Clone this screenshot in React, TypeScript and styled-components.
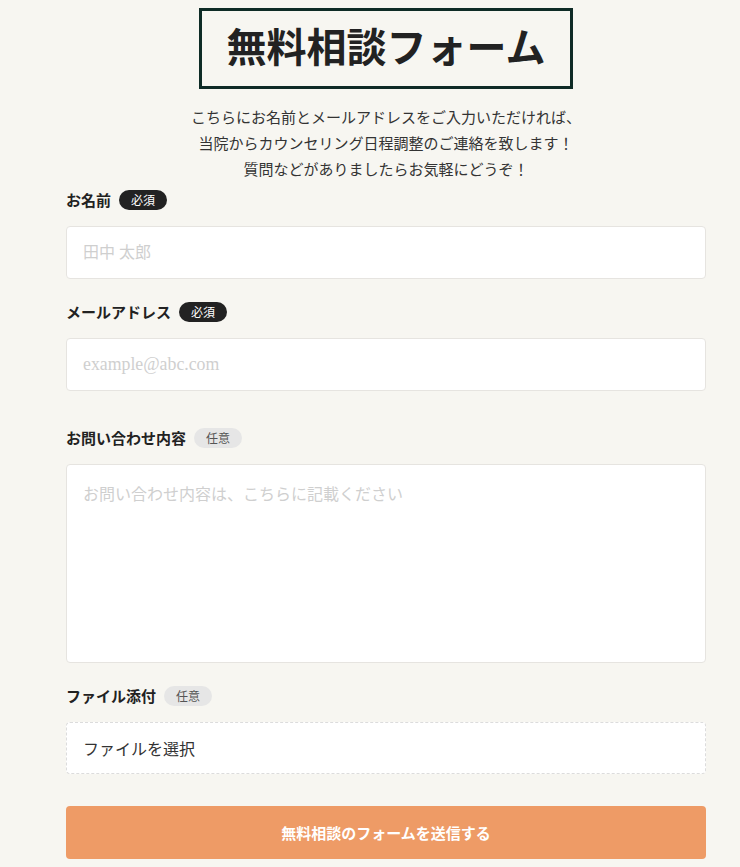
import React from 'react';
import styled, { createGlobalStyle } from 'styled-components';

const GlobalStyle = createGlobalStyle`
    body {
        margin: 0;
        background: #f7f6f1;
        font-family: 'Liberation Serif', 'Noto Sans CJK JP', serif;
        color: #333;
    }
`;

interface IBadge {
    required: boolean;
};

const App = () => {
  return (
    <>
        <GlobalStyle />
        <StyledPage>
            <StyledTitle>無料相談フォーム</StyledTitle>
            <StyledLead>
                こちらにお名前とメールアドレスをご入力いただければ、<br />
                当院からカウンセリング日程調整のご連絡を致します！<br />
                質問などがありましたらお気軽にどうぞ！
            </StyledLead>
            <StyledForm onSubmit={e => e.preventDefault()}>
                <StyledField>
                    <StyledLabel>お名前<StyledBadge required>必須</StyledBadge></StyledLabel>
                    <StyledInput type='text' placeholder='田中 太郎' />
                </StyledField>
                <StyledField wide>
                    <StyledLabel>メールアドレス<StyledBadge required>必須</StyledBadge></StyledLabel>
                    <StyledInput type='email' placeholder='example@abc.com' latin />
                </StyledField>
                <StyledField>
                    <StyledLabel>お問い合わせ内容<StyledBadge required={false}>任意</StyledBadge></StyledLabel>
                    <StyledTextarea placeholder='お問い合わせ内容は、こちらに記載ください' />
                </StyledField>
                <StyledField>
                    <StyledLabel>ファイル添付<StyledBadge required={false}>任意</StyledBadge></StyledLabel>
                    <StyledFile>ファイルを選択</StyledFile>
                </StyledField>
                <StyledSubmit type='submit'>無料相談のフォームを送信する</StyledSubmit>
            </StyledForm>
        </StyledPage>
    </>
  )
}

export default App;

const StyledPage = styled.main`
    width: 640px;
    margin: 0 auto;
    padding: 8px 0 0 32px;
    display: flex;
    flex-direction: column;
    align-items: center;
`;

const StyledTitle = styled.h1`
    margin: 0;
    padding: 8px 25px 8px;
    border: 3px solid #0e2b26;
    font-size: 40px;
    line-height: 59px;
    font-weight: 700;
    color: #222;
`;

const StyledLead = styled.p`
    margin: 16px 0 0;
    text-align: center;
    font-size: 15px;
    line-height: 26px;
    color: #333;
`;

const StyledForm = styled.form`
    width: 100%;
    margin-top: 6px;
    display: flex;
    flex-direction: column;
`;

const StyledField = styled.div<{ wide?: boolean }>`
    display: flex;
    flex-direction: column;
    gap: 16px;
    margin-bottom: ${props => props.wide ? '36px' : '22px'};
`;

const StyledLabel = styled.label`
    display: flex;
    align-items: center;
    gap: 8px;
    height: 21px;
    font-size: 15px;
    font-weight: 700;
    color: #222;
`;

const StyledBadge = styled.span<IBadge>`
    display: inline-flex;
    align-items: center;
    justify-content: center;
    height: 20px;
    padding: 0 12px;
    border-radius: 10px;
    font-size: 12px;
    font-weight: 400;
    background: ${props => props.required ? '#222' : '#e6e6e6'};
    color: ${props => props.required ? '#fff' : '#555'};
`;

const StyledInput = styled.input<{ latin?: boolean }>`
    box-sizing: border-box;
    width: 100%;
    height: 53px;
    padding: 0 16px;
    border: 1px solid #e6e4e0;
    border-radius: 4px;
    background: #fff;
    font-family: inherit;
    font-size: ${props => props.latin ? '17.8px' : '16px'};
    color: #333;
    outline: none;

    &::placeholder {
        color: #cfcfcf;
    }
`;

const StyledTextarea = styled.textarea`
    box-sizing: border-box;
    width: 100%;
    height: 199px;
    padding: 18px 16px;
    border: 1px solid #e6e4e0;
    border-radius: 4px;
    background: #fff;
    font-family: inherit;
    font-size: 16px;
    line-height: 24px;
    color: #333;
    resize: none;
    outline: none;

    &::placeholder {
        color: #cfcfcf;
    }
`;

const StyledFile = styled.div`
    box-sizing: border-box;
    display: flex;
    align-items: center;
    height: 52px;
    padding: 0 16px;
    border: 1px dashed #dcdcdc;
    border-radius: 4px;
    background: #fff;
    font-size: 16px;
    color: #333;
    cursor: pointer;
`;

const StyledSubmit = styled.button`
    margin-top: 10px;
    height: 53px;
    border: none;
    border-radius: 4px;
    background: #ee9b66;
    color: #fff;
    font-family: inherit;
    font-size: 15px;
    font-weight: 700;
    cursor: pointer;
`;
